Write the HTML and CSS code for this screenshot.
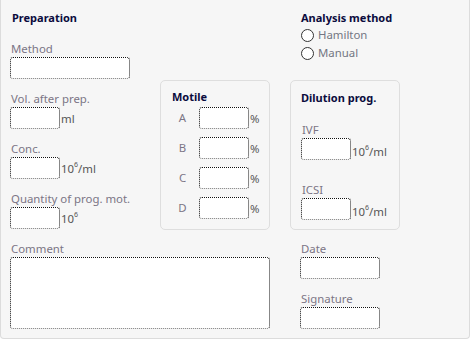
FILE: index.html
```html
<!DOCTYPE html>
<html>
<head>
    <meta charset="UTF-8">
    <link rel="stylesheet" href="styles.css">
</head>
<body>
    <form class="panel">
        <div class="col-prep">
            <h3>Preparation</h3>
            <div class="field first">
                <label>Method</label>
                <input type="text" class="wide">
            </div>
            <div class="field">
                <label>Vol. after prep.</label>
                <div class="line"><input type="text" class="small"><span class="unit">ml</span></div>
            </div>
            <div class="field">
                <label>Conc.</label>
                <div class="line"><input type="text" class="small"><span class="unit">10<sup>6</sup>/ml</span></div>
            </div>
            <div class="field">
                <label>Quantity of prog. mot.</label>
                <div class="line"><input type="text" class="small"><span class="unit">10<sup>6</sup></span></div>
            </div>
        </div>

        <div class="col-mid">
            <div class="box motile">
                <h3>Motile</h3>
                <div class="mrow"><span class="letter">A</span><input type="text" class="small"><span class="unit">%</span></div>
                <div class="mrow"><span class="letter">B</span><input type="text" class="small"><span class="unit">%</span></div>
                <div class="mrow"><span class="letter">C</span><input type="text" class="small"><span class="unit">%</span></div>
                <div class="mrow"><span class="letter">D</span><input type="text" class="small"><span class="unit">%</span></div>
            </div>
        </div>

        <div class="col-right">
            <div class="analysis">
                <h3>Analysis method</h3>
                <div class="radio"><span class="dot"></span>Hamilton</div>
                <div class="radio"><span class="dot"></span>Manual</div>
            </div>
            <div class="box dilution">
                <h3>Dilution prog.</h3>
                <div class="field ivf">
                    <label>IVF</label>
                    <div class="line"><input type="text" class="small"><span class="unit low">10<sup>6</sup>/ml</span></div>
                </div>
                <div class="field icsi">
                    <label>ICSI</label>
                    <div class="line"><input type="text" class="small"><span class="unit low">10<sup>6</sup>/ml</span></div>
                </div>
            </div>
        </div>

        <div class="col-comment">
            <label>Comment</label>
            <textarea></textarea>
        </div>

        <div class="col-sign">
            <div class="field">
                <label>Date</label>
                <input type="text" class="medium">
            </div>
            <div class="field">
                <label>Signature</label>
                <input type="text" class="medium">
            </div>
        </div>
    </form>
</body>
</html>
```

FILE: styles.css
```css
body {
    margin: 0;
    padding: 0;
    background-color: #ffffff;
    font-family: "Noto Sans", "Open Sans", Arial, sans-serif;
    font-size: 11.4px;
    line-height: 16px;
}

.panel {
    box-sizing: border-box;
    width: 470px;
    height: 339px;
    margin: 0;
    padding: 10px 0 0 9px;
    background-color: #f6f6f6;
    border: 1px solid #dcdcdc;
    border-top: none;
    border-radius: 0 0 4px 4px;
    display: grid;
    grid-template-columns: 150px 130px 1fr;
    grid-template-rows: 220px 1fr;
}

h3 {
    margin: 0;
    font-size: 11px;
    line-height: 16px;
    font-weight: bold;
    color: #0b0b3d;
}

label {
    display: block;
    color: #7b7585;
    padding-left: 1px;
}

input,
textarea {
    box-sizing: border-box;
    display: block;
    margin: 0;
    padding: 2px 4px;
    background-color: #ffffff;
    border: 1px dotted #111111;
    border-bottom-color: #777777;
    border-radius: 3px;
    font-family: inherit;
    font-size: 12px;
    outline: none;
}

input {
    height: 22px;
}

input.wide {
    width: 120px;
}

input.small {
    width: 50px;
}

input.medium {
    width: 80px;
}

.line {
    display: flex;
    align-items: flex-end;
}

.unit {
    color: #555555;
    margin-left: 1px;
    line-height: 16px;
    margin-bottom: 2px;
}

.unit sup {
    font-size: 7px;
    line-height: 0;
    vertical-align: 6px;
}

.field {
    margin-top: 12px;
}

.field.first {
    margin-top: 15px;
}

.col-prep h3 {
    padding-left: 2px;
}

/* middle column */
.col-mid {
    padding-top: 70px;
}

.box {
    box-sizing: border-box;
    width: 110px;
    height: 150px;
    border: 1px solid #dedede;
    border-radius: 5px;
    background-color: #f6f6f6;
}

.motile {
    padding: 8px 0 0 11px;
}

.mrow {
    display: flex;
    align-items: flex-end;
    margin-top: 8px;
}

.motile h3 + .mrow {
    margin-top: 2px;
}

.letter {
    width: 17px;
    margin-left: 2px;
    margin-right: 8px;
    text-align: center;
    color: #7b7585;
    line-height: 16px;
    margin-bottom: 3px;
}

/* right column */
.analysis {
    padding-left: 11px;
    height: 70px;
}

.radio {
    display: flex;
    align-items: center;
    height: 18px;
    color: #737683;
}

.dot {
    box-sizing: border-box;
    width: 13px;
    height: 13px;
    border: 1px solid #333333;
    border-radius: 50%;
    background-color: #ffffff;
    margin-right: 4px;
}

.dilution {
    padding: 9px 0 0 10px;
}

.dilution .field.ivf {
    margin-top: 16px;
}

.dilution .field.icsi {
    margin-top: 22px;
}

.unit.low {
    margin-bottom: 0;
    margin-top: 6px;
}

/* bottom row */
.col-comment {
    grid-column: 1 / 3;
    padding-top: 11px;
}

textarea {
    width: 260px;
    height: 72px;
    resize: none;
}

.col-sign {
    padding-left: 10px;
    padding-top: 11px;
}

.col-sign .field {
    margin-top: 0;
}

.col-sign .field + .field {
    margin-top: 12px;
}
```
